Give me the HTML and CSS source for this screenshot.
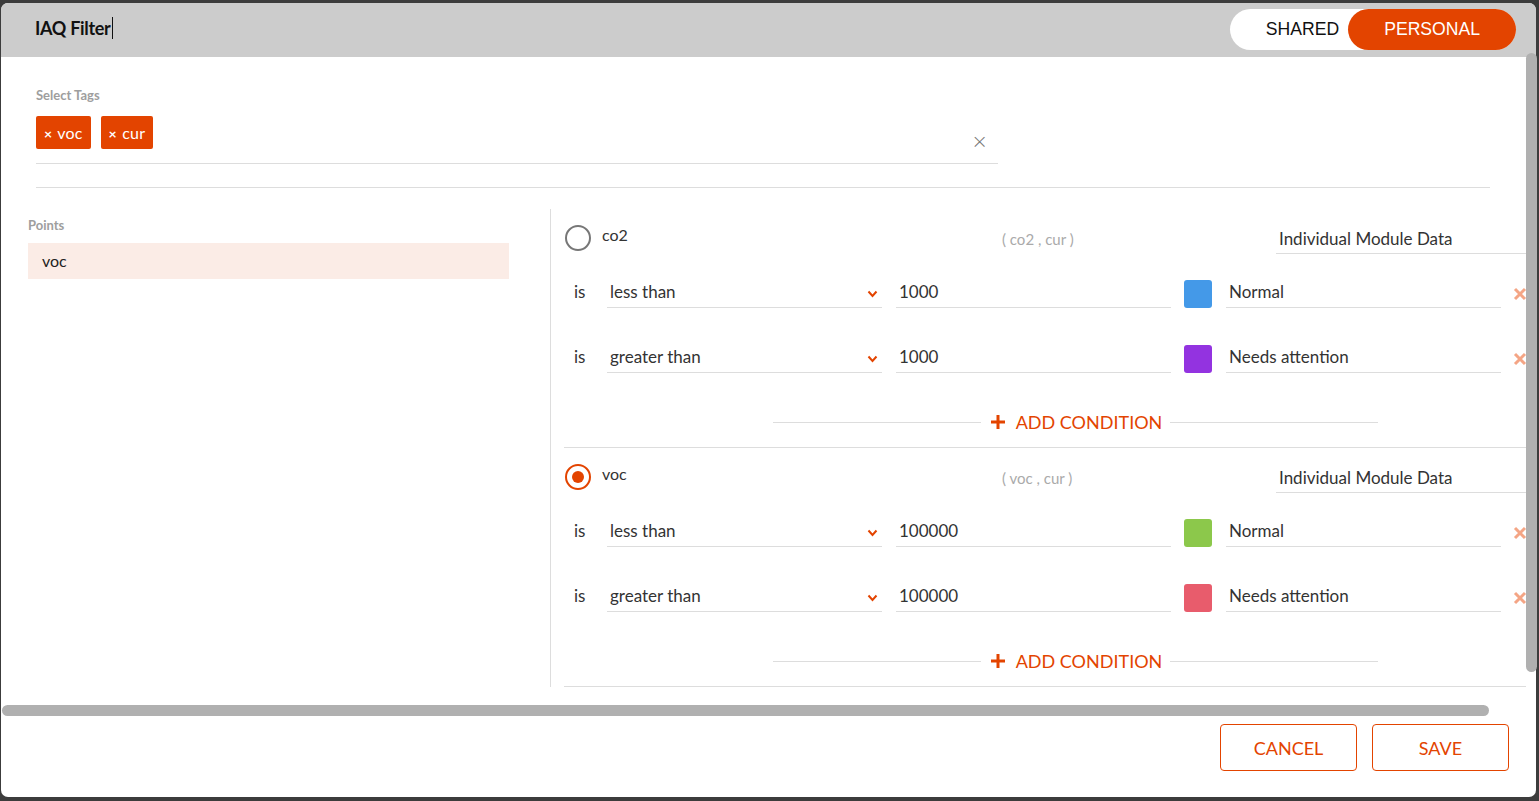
FILE: index.html
```html
<!DOCTYPE html>
<html lang="en">
<head>
    <meta charset="UTF-8">
    <title>IAQ Filter</title>
    <link rel="stylesheet" href="styles.css">
</head>
<body>

    <div class="modal">
        <div class="modal-head">
            <div class="title">IAQ Filter<span class="caret"></span></div>
            <div class="toggle">
                <div class="opt">SHARED</div>
                <div class="opt on">PERSONAL</div>
            </div>
        </div>

        <div class="modal-body">
            <!-- tags -->
            <div class="tags">
                <div class="label">Select Tags</div>
                <div class="tag-field">
                    <span class="tag"><b>&#215;</b> voc</span>
                    <span class="tag"><b>&#215;</b> cur</span>
                    <span class="clear">&#215;</span>
                </div>
            </div>
            <div class="sep"></div>

            <div class="main">
                <div class="points">
                    <div class="label">Points</div>
                    <div class="point sel">voc</div>
                </div>

                <div class="rules">
                    <!-- co2 -->
                    <div class="blk">
                        <div class="blk-head">
                            <div class="blk-name"><span class="radio"></span>co2</div>
                            <div class="blk-tags">( co2 , cur )</div>
                            <div class="field wide">Individual Module Data</div>
                        </div>
                        <div class="cond">
                            <span class="is">is</span>
                            <div class="field sel-f">less than<svg class="chev" width="11" height="8" viewBox="0 0 11 8"><polyline points="1.5,1.5 5.5,6 9.5,1.5" fill="none" stroke="#e34400" stroke-width="2"/></svg></div>
                            <div class="field">1000</div>
                            <span class="swatch" style="background:#4499e8"></span>
                            <div class="field">Normal</div>
                            <svg class="del" width="14" height="14" viewBox="0 0 14 14"><path d="M2 2L12 12M12 2L2 12" stroke="#f4a585" stroke-width="3"/></svg>
                        </div>
                        <div class="cond">
                            <span class="is">is</span>
                            <div class="field sel-f">greater than<svg class="chev" width="11" height="8" viewBox="0 0 11 8"><polyline points="1.5,1.5 5.5,6 9.5,1.5" fill="none" stroke="#e34400" stroke-width="2"/></svg></div>
                            <div class="field">1000</div>
                            <span class="swatch" style="background:#9333e0"></span>
                            <div class="field">Needs attention</div>
                            <svg class="del" width="14" height="14" viewBox="0 0 14 14"><path d="M2 2L12 12M12 2L2 12" stroke="#f4a585" stroke-width="3"/></svg>
                        </div>
                        <div class="add">
                            <span class="line"></span>
                            <span class="add-btn"><svg width="14" height="14" viewBox="0 0 14 14"><path d="M7 0V14M0 7H14" stroke="#e34400" stroke-width="3"/></svg>ADD CONDITION</span>
                            <span class="line"></span>
                        </div>
                    </div>

                    <!-- voc -->
                    <div class="blk">
                        <div class="blk-head">
                            <div class="blk-name"><span class="radio on"></span>voc</div>
                            <div class="blk-tags">( voc , cur )</div>
                            <div class="field wide">Individual Module Data</div>
                        </div>
                        <div class="cond">
                            <span class="is">is</span>
                            <div class="field sel-f">less than<svg class="chev" width="11" height="8" viewBox="0 0 11 8"><polyline points="1.5,1.5 5.5,6 9.5,1.5" fill="none" stroke="#e34400" stroke-width="2"/></svg></div>
                            <div class="field">100000</div>
                            <span class="swatch" style="background:#8cc84b"></span>
                            <div class="field">Normal</div>
                            <svg class="del" width="14" height="14" viewBox="0 0 14 14"><path d="M2 2L12 12M12 2L2 12" stroke="#f4a585" stroke-width="3"/></svg>
                        </div>
                        <div class="cond">
                            <span class="is">is</span>
                            <div class="field sel-f">greater than<svg class="chev" width="11" height="8" viewBox="0 0 11 8"><polyline points="1.5,1.5 5.5,6 9.5,1.5" fill="none" stroke="#e34400" stroke-width="2"/></svg></div>
                            <div class="field">100000</div>
                            <span class="swatch" style="background:#e85c6c"></span>
                            <div class="field">Needs attention</div>
                            <svg class="del" width="14" height="14" viewBox="0 0 14 14"><path d="M2 2L12 12M12 2L2 12" stroke="#f4a585" stroke-width="3"/></svg>
                        </div>
                        <div class="add">
                            <span class="line"></span>
                            <span class="add-btn"><svg width="14" height="14" viewBox="0 0 14 14"><path d="M7 0V14M0 7H14" stroke="#e34400" stroke-width="3"/></svg>ADD CONDITION</span>
                            <span class="line"></span>
                        </div>
                    </div>
                </div>
            </div>
        </div>

        <div class="modal-foot">
            <button class="btn">CANCEL</button>
            <button class="btn">SAVE</button>
        </div>

        <!-- fake scrollbars -->
        <div class="vscroll"></div>
        <div class="hscroll"></div>
    </div>

</body>
</html>
```

FILE: styles.css
```css
body { margin: 0; background: #3c3c3c; font-family: Lato, "Open Sans", sans-serif; color: #333; overflow: hidden; }

.modal { position: relative; margin: 3px 3px 0 1px; height: 794px; background: #fff; border-radius: 7px; display: flex; flex-direction: column; }

.modal-head { height: 54px; flex: none; background: #cccccc; border-radius: 7px 7px 0 0; display: flex; align-items: center; justify-content: space-between; padding: 0 20px 0 34px; }
.title { font-size: 18px; font-weight: bold; color: #111; letter-spacing: -0.3px; display: flex; align-items: center; margin-top: -4px; }
.caret { display: inline-block; width: 1px; height: 22px; background: #111; margin-left: 1px; }

.toggle { display: flex; background: #fff; border-radius: 21px; height: 41px; padding-left: 36px; margin-top: -1px; font-family: "Liberation Sans", Arial, sans-serif; font-size: 17.6px; }
.opt { line-height: 41px; color: #111; }
.opt.on { background: #e34400; color: #fff; border-radius: 21px; padding: 0 36px; margin-left: 9px; }

.modal-body { position: relative; height: 658px; flex: none; overflow: hidden; }

.label { font-size: 13px; font-weight: bold; color: #9e9e9e; }

.tags { padding: 30px 0 0 35px; }
.tag-field { width: 962px; height: 47px; border-bottom: 1px solid #ddd; display: flex; align-items: flex-start; gap: 10px; margin-top: 13px; position: relative; }
.tag { background: #e34400; color: #fff; font-size: 16px; border-radius: 2px; height: 33px; line-height: 33px; padding: 0 8px 0 8px; letter-spacing: 0.2px; }
.tag b { font-size: 14px; margin-right: 1px; }
.clear { position: absolute; right: 10px; top: 15px; font-family: "DejaVu Sans", sans-serif; font-size: 20px; line-height: 20px; color: #777; font-weight: 300; }

.sep { width: 1454px; height: 1px; background: #ddd; margin: 23px 0 0 35px; }

.main { display: flex; margin-top: 21px; }
.points { width: 522px; padding-left: 27px; flex: none; padding-top: 8px; }
.point { margin-top: 10px; height: 36px; line-height: 36px; padding-left: 14px; width: 467px; font-size: 16px; color: #222; }
.point.sel { background: #fbece6; }

.rules { border-left: 1px solid #ddd; padding-left: 13px; width: 1000px; flex: none; }

.blk { border-bottom: 1px solid #ddd; padding-top: 16px; width: 962px; }
.blk-head { display: flex; height: 30px; align-items: flex-start; font-size: 16px; }
.blk-name { width: 437px; flex: none; display: flex; align-items: flex-start; gap: 11px; padding-left: 1px; color: #333; line-height: 20px; }
.radio { width: 22px; height: 22px; border: 2px solid #777; border-radius: 50%; position: relative; }
.radio.on { border-color: #e34400; }
.radio.on::after { content: ""; position: absolute; left: 5px; top: 5px; width: 12px; height: 12px; border-radius: 50%; background: #e34400; }
.blk-tags { width: 274px; flex: none; color: #aaa; font-size: 15px; padding-top: 5px; }
.field { width: 272px; height: 27px; border-bottom: 1px solid #ddd; font-size: 17px; line-height: 24px; padding-left: 3px; position: relative; flex: none; }
.field.wide { height: 28px; width: 260px; line-height: 28px; }

.cond { display: flex; align-items: flex-start; margin-top: 25px; height: 28px; }
.cond + .cond { margin-top: 37px; }
.is { width: 43px; padding-left: 10px; font-size: 17px; line-height: 24px; box-sizing: border-box; flex: none; }
.sel-f { margin-right: 14px; }
.chev { position: absolute; right: 4px; top: 10px; }
.swatch { width: 28px; height: 28px; border-radius: 3px; margin: 0 14px 0 13px; flex: none; }
.del { margin: 7px 0 0 12px; flex: none; }

.add { display: flex; align-items: center; margin: 37px 0 13px 209px; width: 605px; height: 24px; }
.add .line { flex: 1; height: 1px; background: #ddd; }
.add-btn { display: flex; align-items: center; gap: 11px; color: #e34400; font-size: 18px; padding: 0 8px 0 10px; }

.modal-foot { flex: 1; display: flex; justify-content: flex-end; gap: 15px; padding: 9px 27px 0 0; align-items: flex-start; }
.btn { width: 137px; height: 47px; background: #fff; border: 1px solid #e34400; border-radius: 4px; color: #e34400; font-family: Lato, sans-serif; font-size: 18px; }

.vscroll { position: absolute; left: 1525px; top: 50px; width: 11px; height: 619px; background: #b0b0b0; border-radius: 6px; }
.hscroll { position: absolute; left: 1px; top: 702px; width: 1487px; height: 11px; background: #b0b0b0; border-radius: 6px; }
```
